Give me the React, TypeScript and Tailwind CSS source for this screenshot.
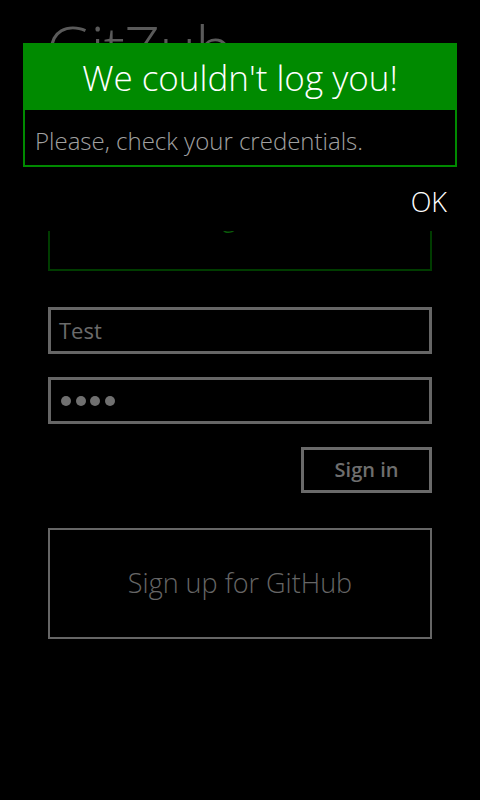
import React from "react";

const font = { fontFamily: '"Open Sans", "Noto Sans", sans-serif' };

const App = () => {
  return (
    <div className="relative w-[480px] h-[800px] bg-black overflow-hidden" style={font}>
      {/* page behind the message box */}
      <div className="flex flex-col px-[48px]">
        <h1 className="text-[63px] font-light text-[#5a5a5a] leading-none mt-[16px] tracking-[-1px] -ml-[2px]">
          GitZub
        </h1>
        <div className="mt-[107px] h-[85px] border-2 border-[#003c00] flex items-center justify-center pb-[22px] pr-[28px]">
          <span className="text-[24px] text-[#0a5a0a]">Login</span>
        </div>
        <div className="mt-[36px] h-[47px] border-[3px] border-[#666] flex items-center px-[8px]">
          <span className="text-[22px] text-[#6b6b6b]">Test</span>
        </div>
        <div className="mt-[23px] h-[47px] border-[3px] border-[#666] flex items-center gap-[4.5px] px-[10px]">
          <span className="w-[10px] h-[10px] rounded-full bg-[#707070]" />
          <span className="w-[10px] h-[10px] rounded-full bg-[#707070]" />
          <span className="w-[10px] h-[10px] rounded-full bg-[#707070]" />
          <span className="w-[10px] h-[10px] rounded-full bg-[#707070]" />
        </div>
        <div className="mt-[23px] flex justify-end">
          <button className="w-[131px] h-[46px] border-[3px] border-[#6a6a6a] text-[20px] font-semibold text-[#6e6e6e] flex items-center justify-center">
            Sign in
          </button>
        </div>
        <button className="mt-[35px] h-[111px] border-2 border-[#666] text-[27px] font-light text-[#666] flex items-center justify-center">
          Sign up for GitHub
        </button>
      </div>

      {/* message box */}
      <div className="absolute left-0 right-0 top-[43px] h-[188px] bg-black">
        <div className="mx-[23px]">
          <div className="h-[67px] bg-[#008a00] flex items-center justify-center">
            <span className="text-[35px] font-light text-white leading-none pt-[2px]">We couldn't log you!</span>
          </div>
          <div className="h-[57px] border-2 border-t-0 border-[#008a00] flex items-center px-[10px] pt-[6px]">
            <span className="text-[24px] font-light text-[#a0a0a0]">Please, check your credentials.</span>
          </div>
        </div>
        <div className="flex justify-end pr-[33px] mt-[21px]">
          <span className="text-[27px] font-light text-white leading-none">OK</span>
        </div>
      </div>
    </div>
  );
};

export default App;
